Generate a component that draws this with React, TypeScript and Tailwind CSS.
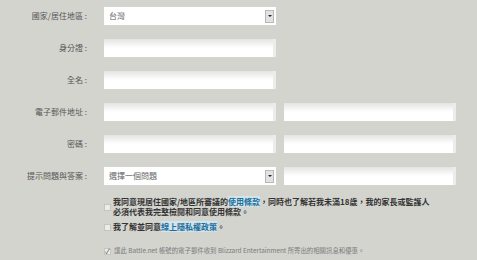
import { ReactNode } from "react";

const font = { fontFamily: '"Noto Sans CJK TC", "Noto Sans", sans-serif' };

function TextBox({ children }: { children?: ReactNode }) {
  return (
    <div className="relative h-[18px] w-[172px] bg-gradient-to-b from-[#e4e4e2] via-white to-white border-r-[3px] border-r-[#ececea]">
      {children}
    </div>
  );
}

function SelectBox({ value }: { value: string }) {
  return (
    <div className="flex h-[18px] w-[172px] items-center justify-between bg-white pl-[5px] pr-[2px]">
      <span className="text-[8px] leading-none text-[#666]">{value}</span>
      <span className="flex h-[13px] w-[9px] items-center justify-center border border-[#b8b8b8] bg-[#e2e2e2]">
        <span className="block h-0 w-0 border-x-[2px] border-t-[2px] border-x-transparent border-t-[#222]" />
      </span>
    </div>
  );
}

function Row({ label, children }: { label: string; children: ReactNode }) {
  return (
    <div className="flex h-[18px] items-center">
      <div className="w-[88px] pr-[1px] text-right text-[8px] leading-none text-[#555]">
        {label}&nbsp;:
      </div>
      <div className="ml-[16px] flex gap-[8px]">{children}</div>
    </div>
  );
}

function Check({ checked }: { checked?: boolean }) {
  return (
    <span className="flex h-[7px] w-[7px] shrink-0 items-center justify-center border border-[#c4c4c0] bg-[#ececea] text-[7px] leading-none text-[#555]">
      {checked ? "✓" : ""}
    </span>
  );
}

function Link({ children }: { children: ReactNode }) {
  return <span className="bg-[#d3e4ea] text-[#1b6f9e]">{children}</span>;
}

export default function App() {
  return (
    <div className="h-[260px] w-[477px] overflow-hidden bg-[#d4d4cf] pt-[7px]" style={font}>
      <div className="flex flex-col gap-[14px]">
        <Row label="國家/居住地區">
          <SelectBox value="台灣" />
        </Row>
        <Row label="身分證">
          <TextBox />
        </Row>
        <Row label="全名">
          <TextBox />
        </Row>
        <Row label="電子郵件地址">
          <TextBox />
          <TextBox />
        </Row>
        <Row label="密碼">
          <TextBox />
          <TextBox />
        </Row>
        <Row label="提示問題與答案">
          <SelectBox value="選擇一個問題" />
          <TextBox />
        </Row>
      </div>

      <div className="ml-[104px] mt-[12px] flex flex-col text-[8px] font-bold leading-[12px] text-[#333]">
        <div className="flex items-center gap-[2px]">
          <Check />
          <div className="leading-[10px]">
            <div className="h-[10px]">
              我同意現居住國家/地區所審議的<Link>使用條款</Link>，同時也了解若我未滿18歲，我的家長或監護人
            </div>
            <div className="h-[10px]">必須代表我完整檢閱和同意使用條款。</div>
          </div>
        </div>
        <div className="mt-[4px] flex items-center gap-[2px]">
          <Check />
          <div>
            我了解並同意<Link>線上隱私權政策</Link>。
          </div>
        </div>
        <div className="mt-[14px] flex items-center gap-[3px] text-[6.4px] font-normal leading-[8px] text-[#7a7a7a]">
          <Check checked />
          <span>讓此 Battle.net 帳號的電子郵件收到 Blizzard Entertainment 所寄出的相關訊息和優惠。</span>
        </div>
      </div>
    </div>
  );
}
